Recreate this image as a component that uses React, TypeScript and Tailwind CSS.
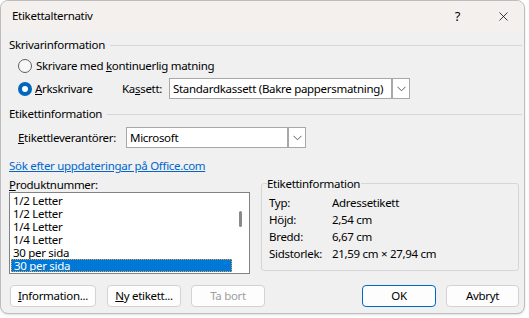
import { X } from "lucide-react";

const items = ["1/2 Letter", "1/2 Letter", "1/4 Letter", "1/4 Letter", "30 per sida", "30 per sida"];

const Chevron = () => (
  <div className="flex h-full w-[18px] items-center justify-center border border-[#a8a8a8] bg-white">
    <svg width="9" height="6" viewBox="0 0 9 6">
      <path d="M0.5 0.8 L4.5 4.8 L8.5 0.8" fill="none" stroke="#5c5c5c" strokeWidth="1" />
    </svg>
  </div>
);

const SectionHeader = ({ label }: { label: string }) => (
  <div className="flex h-4 items-center">
    <span>{label}</span>
    <div className="ml-[5px] -mr-[2px] h-px flex-1 bg-[#d6d6d6]" />
  </div>
);

const Btn = ({ children, w, primary, disabled }: { children: React.ReactNode; w: string; primary?: boolean; disabled?: boolean }) => (
  <div
    className={`flex h-[22px] items-center justify-center rounded-[4px] border bg-[#fdfdfd] ${w} ${
      primary ? "border-[#0067c0]" : "border-[#d2d2d2]"
    } ${disabled ? "text-[#9d9d9d]" : "text-black"}`}
  >
    {children}
  </div>
);

const App = () => {
  return (
    <div className="h-[318px] w-[529px] whitespace-nowrap bg-white font-['Segoe_UI','Noto_Sans',sans-serif] text-[11.5px] leading-4 tracking-[-0.3px] text-black">
      <div className="flex h-[314px] w-[525px] flex-col overflow-hidden rounded-lg border border-[#bdbdbd] bg-[#f0f0f0] shadow">
        {/* title bar */}
        <div className="flex h-[30px] shrink-0 items-center bg-[#f4f0ed] pl-[11px]">
          <span>Etikettalternativ</span>
          <div className="flex-1" />
          <span className="mr-[36px] text-[13px]">?</span>
          <X size={15} strokeWidth={1.2} className="mr-[13px]" />
        </div>

        <div className="flex flex-col pl-[8px] pr-[4px]">
          <div className="mt-[6px]">
            <SectionHeader label="Skrivarinformation" />
          </div>

          <div className="mt-[3px] flex h-5 items-center pl-[9px]">
            <div className="h-[14px] w-[14px] rounded-full border border-[#5f5f5f] bg-[#f7f7f7]" />
            <span className="ml-[4px]">
              Skrivare med <u>k</u>ontinuerlig matning
            </span>
          </div>

          <div className="mt-[2px] flex h-[21px] items-center pl-[9px]">
            <div className="flex w-[104px] items-center">
              <div className="flex h-[14px] w-[14px] items-center justify-center rounded-full bg-[#0067c0]">
                <div className="h-[6px] w-[6px] rounded-full bg-white" />
              </div>
              <span className="ml-[3px]">
                <u>A</u>rkskrivare
              </span>
            </div>
            <span className="w-[47px]">
              Ka<u>s</u>sett:
            </span>
            <div className="flex h-full w-[223px] items-center border border-[#a8a8a8] bg-white pl-[3px]">
              Standardkassett (Bakre pappersmatning)
            </div>
            <Chevron />
          </div>

          <div className="mt-[7px]">
            <SectionHeader label="Etikettinformation" />
          </div>

          <div className="mt-[5px] flex h-[21px] items-center pl-[9px]">
            <span className="w-[108px]">
              <u>E</u>tikettleverantörer:
            </span>
            <div className="flex h-full w-[162px] items-center border border-[#a8a8a8] bg-white pl-[3px]">Microsoft</div>
            <Chevron />
          </div>

          <div className="mt-[10px] flex h-4 items-center">
            <span className="text-[#0066cc] underline">Sök efter uppdateringar på Office.com</span>
          </div>

          <div className="mt-[2px] flex">
            <div className="flex w-[241px] flex-col">
              <div className="h-4 pt-px">
                <u>P</u>roduktnummer:
              </div>
              <div className="flex h-[82px] border border-[#828282] bg-white">
                <div className="flex flex-1 flex-col pt-px">
                  {items.map((it, i) => {
                    const sel = i === items.length - 1;
                    return (
                      <div
                        key={i}
                        className={`ml-px flex h-[13px] items-center overflow-hidden pl-[2px] leading-[12px] ${
                          sel ? "border border-dotted border-[#e8a040] bg-[#0078d7] text-white" : ""
                        }`}
                      >
                        {it}
                      </div>
                    );
                  })}
                </div>
                <div className="flex w-[17px] justify-center pt-[18px]">
                  <div className="h-[16px] w-[3px] rounded-sm bg-[#8a8a8a]" />
                </div>
              </div>
            </div>

            <div className="ml-[11px] mt-[7px] flex h-[88px] w-[258px] flex-col rounded-[3px] border border-[#d6d6d6] px-[7px]">
              <div className="-ml-[2px] -mt-[8px] h-4 w-fit bg-[#f0f0f0] pr-px">Etikettinformation</div>
              <div className="mt-[2px] flex flex-col">
                {[
                  ["Typ:", "Adressetikett"],
                  ["Höjd:", "2,54 cm"],
                  ["Bredd:", "6,67 cm"],
                  ["Sidstorlek:", "21,59 cm × 27,94 cm"],
                ].map(([k, v]) => (
                  <div key={k} className="flex h-[17px] items-center">
                    <span className="w-[63px]">{k}</span>
                    <span>{v}</span>
                  </div>
                ))}
              </div>
            </div>
          </div>

          <div className="mt-[11px] flex items-center pl-px">
            <Btn w="w-[86px]">
              <span>
                <u>I</u>nformation...
              </span>
            </Btn>
            <div className="ml-[11px]">
              <Btn w="w-[74px]">
                <span>
                  <u>N</u>y etikett...
                </span>
              </Btn>
            </div>
            <div className="ml-[10px]">
              <Btn w="w-[74px]" disabled>
                Ta bort
              </Btn>
            </div>
            <div className="flex-1" />
            <Btn w="w-[74px]" primary>
              OK
            </Btn>
            <div className="ml-[10px] mr-px">
              <Btn w="w-[73px]">Avbryt</Btn>
            </div>
          </div>
        </div>
      </div>
    </div>
  );
};

export default App;
